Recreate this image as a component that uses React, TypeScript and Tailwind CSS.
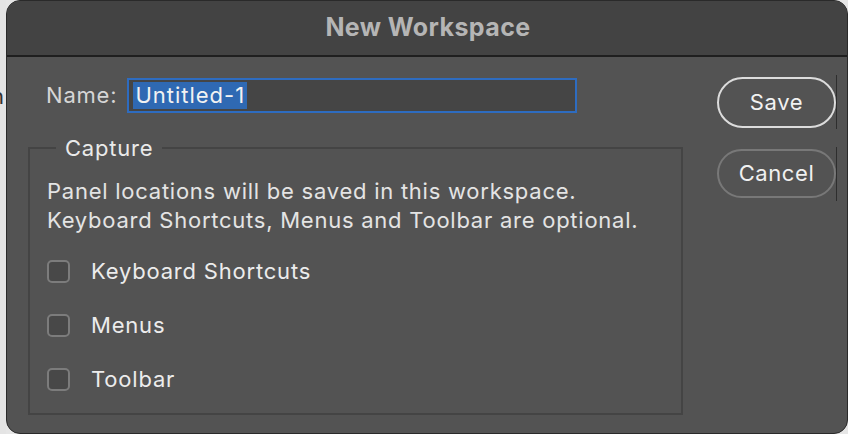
import React from 'react';

const font = { fontFamily: 'Inter, "Liberation Sans", sans-serif' };

const Check = ({ label }: { label: string }) => (
    <label className="flex items-center h-[24px]">
        <span className="w-[23px] h-[23px] rounded-[5px] border-2 border-[#7c7c7c] bg-[#484848]" />
        <span className="ml-[21px] text-[22px] tracking-[0.8px] text-[#ececec]">{label}</span>
    </label>
);

const App = () => {
    return (
        <div className="w-[848px] h-[434px] bg-[#e6e6e6] flex overflow-hidden" style={font}>
            {/* window behind */}
            <div className="w-[6px] shrink-0 relative overflow-hidden bg-[#e4e4e4]">
                <span className="absolute left-[-9px] top-[80px] text-[22px] text-[#333]">n</span>
            </div>

            <div className="w-[842px] h-[434px] shrink-0 flex flex-col rounded-[14px] border border-[#2a2a2a] bg-[#535353] overflow-hidden">
                {/* Title bar */}
                <div className="h-[56px] shrink-0 bg-[#434343] border-b-2 border-[#1f1f1f] flex items-center justify-center">
                    <span className="text-[25px] font-bold tracking-[0.4px] text-[#b5b5b5] ml-[2px]">New Workspace</span>
                </div>

                <div className="flex-1 flex pt-[20px]">
                    {/* Left column */}
                    <div className="w-[700px] pl-[22px]">
                        <div className="flex items-center h-[36px]">
                            <span className="ml-[17px] text-[22px] tracking-[0.8px] text-[#d6d6d6]">Name:</span>
                            <div className="ml-[10px] w-[450px] h-[35px] border-2 border-[#2e6cc0] bg-[#454545] flex items-center pl-[4px]">
                                <span className="bg-[#2f69b3] text-[22px] tracking-[1px] text-[#f2f2f2] leading-[27px] px-[2px]">Untitled-1</span>
                            </div>
                        </div>

                        <fieldset className="mt-[23px] ml-[-1px] w-[655px] h-[279px] border-2 border-[#444444] pl-[17px] pr-[10px]">
                            <legend className="ml-[9px] px-[9px] text-[22px] tracking-[0.8px] text-[#eaeaea] leading-[24px]">Capture</legend>
                            <p className="mt-[17px] text-[22px] tracking-[0.75px] leading-[29px] text-[#e4e4e4]">
                                Panel locations will be saved in this workspace.
                                <br />
                                Keyboard Shortcuts, Menus and Toolbar are optional.
                            </p>
                            <div className="mt-[24px] flex flex-col gap-[30px]">
                                <Check label="Keyboard Shortcuts" />
                                <Check label="Menus" />
                                <Check label="Toolbar" />
                            </div>
                        </fieldset>
                    </div>

                    {/* Buttons */}
                    <div className="flex flex-col pl-[10px] gap-[20px]">
                        <div className="flex">
                            <button className="w-[119px] h-[51px] rounded-full border-2 border-[#dcdcdc] text-[22px] tracking-[0.6px] text-[#f2f2f2]">Save</button>
                            <div className="w-[1px] h-[54px] bg-[#2e2e2e] mt-[-2px]" />
                        </div>
                        <div className="flex">
                            <button className="w-[119px] h-[49px] rounded-full border-2 border-[#787878] text-[22px] tracking-[0.6px] text-[#f0f0f0]">Cancel</button>
                            <div className="w-[1px] h-[54px] bg-[#2e2e2e] mt-[-2px]" />
                        </div>
                    </div>
                </div>
            </div>
        </div>
    );
};

export default App;
